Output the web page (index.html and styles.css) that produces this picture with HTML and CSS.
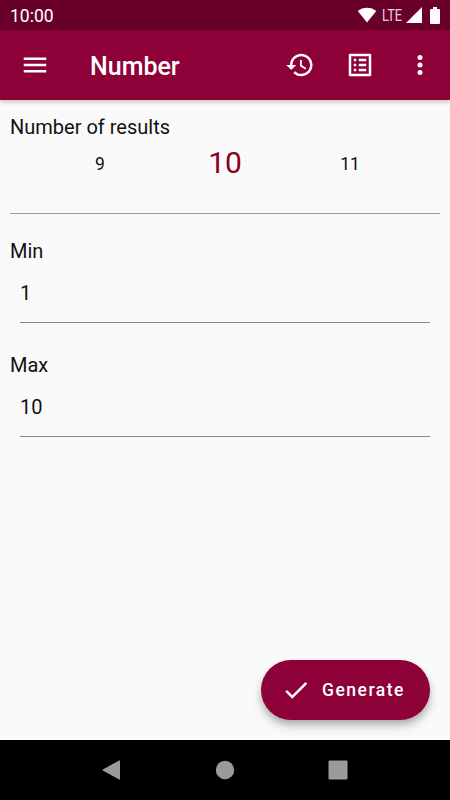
FILE: index.html
```html
<!DOCTYPE html>
<html lang="en">
<head>
  <meta charset="UTF-8">
  <meta name="viewport" content="width=device-width, initial-scale=1.0">
  <title>Number</title>
  <link rel="stylesheet" href="styles.css">
</head>
<body>
  <div class="screen">
    <!-- Status Bar -->
    <div class="status-bar">
      <span class="clock">10:00</span>
      <div class="status-icons">
        <svg class="wifi" width="20" height="16" viewBox="0 0 20 16"><path d="M10 15.5L.7 4.1C3.2 1.9 6.400.7 10 .7s6.800 1.200 9.300 3.400z"/></svg>
        <span class="network">LTE</span>
        <svg class="signal" width="16" height="16" viewBox="0 0 16 16"><path d="M0 16L16 0v16z"/></svg>
        <svg class="battery" width="10" height="17" viewBox="0 0 10 17"><path d="M3 0h4v2h2q1 0 1 1v13q0 1-1 1H1q-1 0-1-1V3q0-1 1-1h2z"/></svg>
      </div>
    </div>

    <!-- App Bar -->
    <header class="app-bar">
      <button class="icon-button" aria-label="Menu">
        <svg viewBox="0 0 24 24"><path d="M3 18h18v-2H3v2zm0-5h18v-2H3v2zm0-7v2h18V6H3z"/></svg>
      </button>
      <h1>Number</h1>
      <button class="icon-button" aria-label="History">
        <svg viewBox="0 0 24 24"><path d="M13 3c-4.970 0-9 4.030-9 9H1l3.890 3.890.07.14L9 12H6c0-3.870 3.130-7 7-7s7 3.130 7 7-3.130 7-7 7c-1.930 0-3.680-.79-4.940-2.060l-1.420 1.420C8.270 19.990 10.510 21 13 21c4.970 0 9-4.030 9-9s-4.030-9-9-9zm-1 5v5l4.280 2.540.72-1.210-3.500-2.080V8H12z"/></svg>
      </button>
      <button class="icon-button" aria-label="Lists">
        <svg viewBox="0 0 24 24"><path fill-rule="evenodd" d="M4 3h16q1 0 1 1v16q0 1-1 1H4q-1 0-1-1V4q0-1 1-1zm1 2v14h14V5zM11 7h6v2h-6zm0 4h6v2h-6zm0 4h6v2h-6zM7 7h2v2H7zm0 4h2v2H7zm0 4h2v2H7z"/></svg>
      </button>
      <button class="icon-button" aria-label="More">
        <svg viewBox="0 0 24 24"><circle cx="12" cy="6" r="2"/><circle cx="12" cy="12" r="2"/><circle cx="12" cy="18" r="2"/></svg>
      </button>
    </header>

    <!-- Settings -->
    <main class="content">
      <section class="results">
        <h2>Number of results</h2>
        <div class="picker">
          <span>9</span>
          <span class="selected">10</span>
          <span>11</span>
        </div>
      </section>

      <section class="field">
        <label for="min">Min</label>
        <input type="text" id="min" value="1">
      </section>

      <section class="field">
        <label for="max">Max</label>
        <input type="text" id="max" value="10">
      </section>

      <button class="generate">
        <svg viewBox="0 0 24 24"><path d="M9 16.170L4.830 12l-1.420 1.410L9 19 21 7l-1.410-1.410z"/></svg>
        <span>Generate</span>
      </button>
    </main>

    <!-- Navigation Bar -->
    <nav class="nav-bar">
      <svg viewBox="0 0 20 20"><path d="M18 .8v18.400q0 .8-.8.4L.8 10.500q-.8-.5 0-1L17.200.4q.8-.4.8.4z"/></svg>
      <svg viewBox="0 0 20 20"><circle cx="10" cy="10" r="9.200"/></svg>
      <svg viewBox="0 0 20 20"><rect x=".5" y=".5" width="19" height="19" rx="1"/></svg>
    </nav>
  </div>
</body>
</html>
```
FILE: styles.css
```css
:root {
  --primary: #8e0038;
  --primary-dark: #69002a;
  --bg-color: #fafafa;
  --text-color: #111;
}

* {
  box-sizing: border-box;
}

body {
  margin: 0;
  font-family: Roboto, sans-serif;
  color: var(--text-color);
}

h1, h2 {
  margin: 0;
}

svg {
  display: block;
  fill: currentColor;
}

button {
  border: none;
  padding: 0;
  color: #fff;
  font-family: inherit;
  cursor: pointer;
}

.screen {
  display: flex;
  flex-direction: column;
  height: 800px;
  overflow: hidden;
  background: var(--bg-color);
}

.status-bar {
  display: flex;
  justify-content: space-between;
  align-items: center;
  height: 30px;
  padding: 0 10px;
  background: var(--primary-dark);
  color: #fff;
}

.clock {
  padding-top: 2px;
  font-size: 17.5px;
  line-height: 30px;
}

.status-icons {
  display: flex;
  align-items: center;
}

.network {
  width: 22px;
  margin: 0 2px 0 5px;
  font-size: 16px;
  color: #e6d5dc;
  transform: scaleX(0.8);
  transform-origin: left;
}

.battery {
  margin-left: 8px;
}

.app-bar {
  display: flex;
  align-items: center;
  height: 70px;
  padding-left: 5px;
  background: var(--primary);
  color: #fff;
  box-shadow: 0 2px 5px rgba(0, 0, 0, 0.22);
  z-index: 1;
}

.app-bar h1 {
  flex: 1;
  padding: 2px 0 0 25px;
  font-size: 25px;
  font-weight: 500;
}

.icon-button {
  width: 60px;
  height: 60px;
  padding: 15px;
  background: none;
}

.content {
  display: flex;
  flex: 1;
  flex-direction: column;
  padding: 10px 10px 20px;
}

.results {
  height: 104px;
  border-bottom: 1px solid #999;
}

.results h2, .field label {
  display: block;
  font-size: 20px;
  font-weight: 400;
  line-height: 34px;
}

.picker {
  display: grid;
  grid-template-columns: repeat(3, 125px);
  justify-content: center;
  align-items: center;
  height: 40px;
  text-align: center;
  font-size: 17.5px;
}

.picker .selected {
  padding-bottom: 3px;
  color: #8b0020;
  font-size: 30px;
}

.field {
  height: 114px;
  padding-top: 20px;
}

.field input {
  display: block;
  width: 410px;
  height: 55px;
  margin-left: 10px;
  padding: 0 0 4px;
  border: none;
  border-bottom: 1px solid #888;
  outline: none;
  background: none;
  color: inherit;
  font: 20px Roboto, sans-serif;
}

.generate {
  display: flex;
  align-items: center;
  align-self: flex-end;
  gap: 11px;
  width: 169px;
  height: 60px;
  margin: auto 10px 0 0;
  padding-left: 20px;
  border-radius: 30px;
  background: var(--primary);
  box-shadow: 0 4px 6px rgba(0, 0, 0, 0.2), 0 7px 12px rgba(0, 0, 0, 0.14);
  font-size: 17.5px;
  font-weight: 500;
  letter-spacing: 1.5px;
}

.generate svg {
  width: 30px;
  height: 30px;
}

.nav-bar {
  display: flex;
  justify-content: center;
  align-items: center;
  gap: 93px;
  height: 60px;
  background: #000;
  color: #9b9b9b;
  z-index: 1;
}

.nav-bar svg {
  width: 20px;
  height: 20px;
}
```
